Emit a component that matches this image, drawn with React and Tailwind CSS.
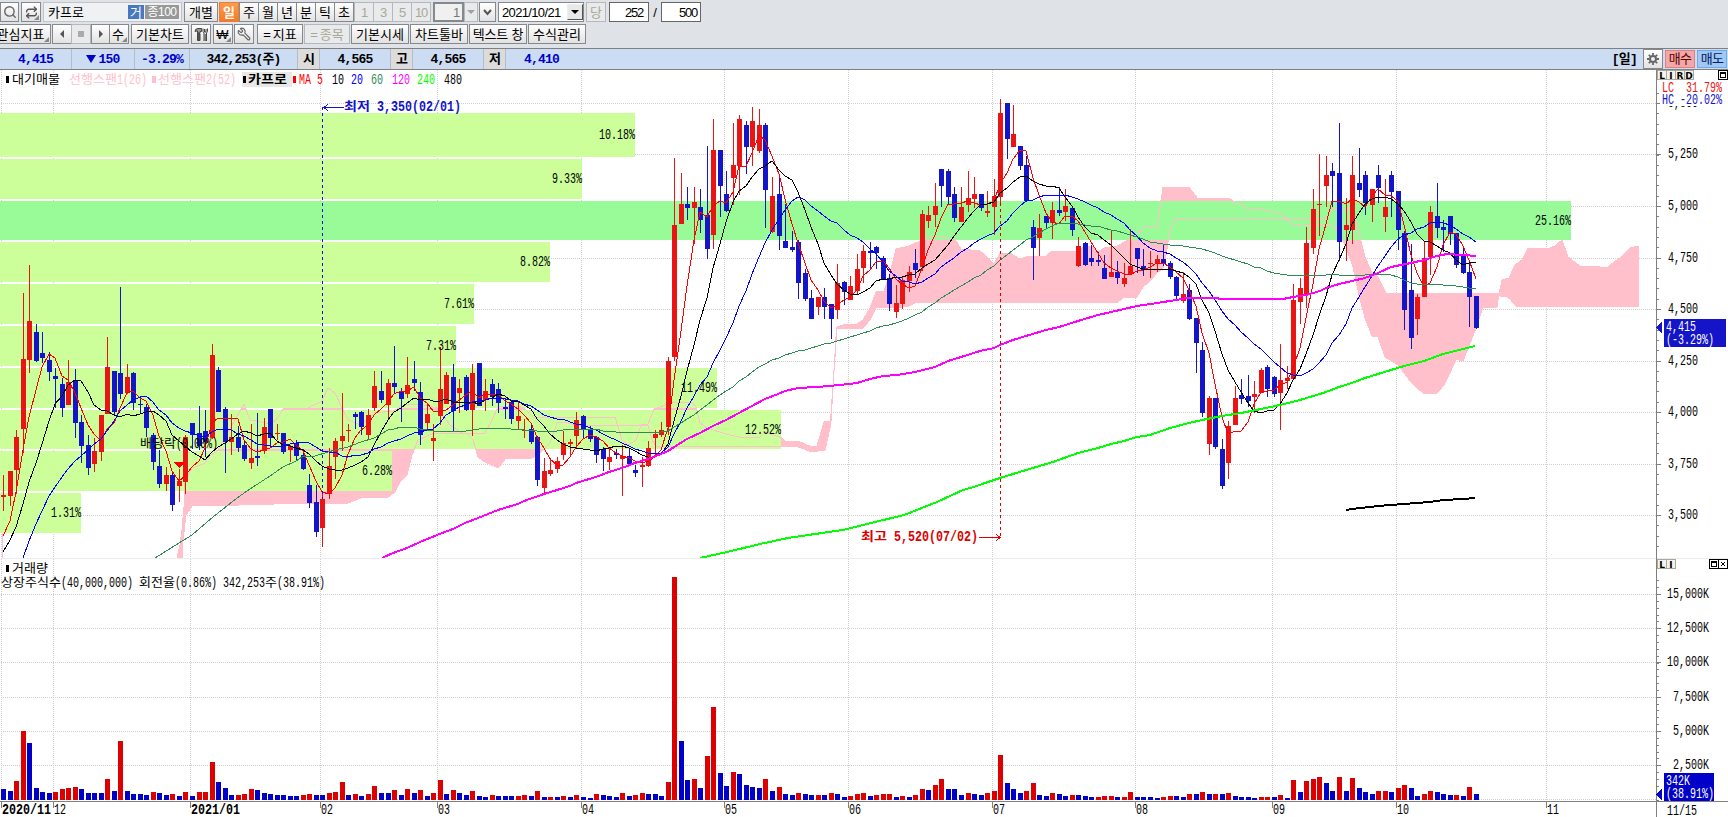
import { Search, Repeat, Wrench } from "lucide-react";

const RED = "#ea1414";
const BLUE = "#1414c8";
const PINK = "#ffc0cb";

// [up, high, bodyTop, bodyBottom, low] as pane y values
const CANDLES = [
  [1,475,495,497,511],[1,471,471,496,506],[1,430,437,470,494],[1,293,359,429,453],[1,265,321,360,373],
  [0,324,332,361,362],[0,332,353,358,363],[0,352,360,372,381],[0,368,376,379,408],[0,378,384,408,417],
  [1,360,382,405,405],[0,369,381,423,438],[0,415,422,446,463],[0,435,445,468,475],[1,438,451,464,472],
  [1,415,415,452,461],[1,337,367,414,414],[0,371,371,412,415],[0,287,373,394,399],[1,364,377,393,394],
  [0,372,373,403,410],[0,396,404,405,413],[0,404,407,428,437],[0,433,435,462,470],[0,450,466,484,488],
  [1,467,475,484,491],[0,473,475,505,511],[1,469,481,486,502],[1,435,437,482,494],[0,423,423,435,449],
  [0,406,433,446,450],[0,410,431,442,457],[1,344,355,438,439],[0,367,370,412,412],[0,407,409,442,473],
  [1,414,437,442,455],[0,426,437,448,452],[0,441,445,459,461],[1,424,458,463,469],[0,413,456,458,466],
  [1,418,427,451,454],[0,409,409,438,448],[1,424,433,434,440],[0,433,433,452,454],[1,445,446,450,462],
  [0,440,443,456,460],[0,449,455,469,470],[0,474,485,503,508],[0,485,502,532,537],[1,494,499,528,547],
  [1,448,466,494,499],[1,438,441,457,479],[1,393,436,441,451],[1,424,430,431,442],[0,412,414,417,429],
  [0,411,412,427,435],[1,409,415,435,439],[1,371,386,408,411],[0,371,391,400,403],[1,379,383,405,419],
  [0,346,383,387,393],[0,388,391,399,422],[1,357,385,394,398],[0,361,379,383,391],[0,382,392,435,445],
  [1,405,414,423,429],[1,424,438,441,461],[1,347,389,416,425],[1,372,375,404,404],[0,364,377,411,431],
  [1,379,388,393,413],[0,375,377,410,411],[1,364,373,410,436],[0,363,363,406,406],[1,379,391,400,411],
  [0,379,384,397,406],[0,383,389,403,413],[0,398,407,409,419],[0,401,402,419,424],[1,402,416,421,429],
  [1,419,430,431,438],[0,424,429,442,444],[0,436,437,480,486],[1,458,471,488,494],[1,458,470,474,476],
  [1,457,461,469,473],[1,431,443,455,460],[1,439,442,444,457],[1,412,420,436,448],[0,415,416,430,438],
  [0,426,429,439,442],[0,436,437,455,463],[0,447,449,459,471],[1,449,457,462,470],[0,449,453,455,459],
  [1,445,456,459,496],[0,449,456,464,466],[0,465,470,473,477],[1,457,465,467,487],[1,441,448,466,467],
  [1,430,434,438,455],[1,422,430,435,437],[1,357,361,427,435],[1,158,225,357,361],[1,173,204,224,224],
  [0,187,204,208,220],[1,187,202,208,244],[0,189,207,220,233],[0,146,215,249,259],[1,119,150,235,249],
  [0,150,150,186,217],[0,171,194,211,212],[1,123,165,178,205],[1,115,119,166,195],[0,121,125,147,174],
  [1,107,121,147,166],[1,109,125,151,153],[0,123,125,190,228],[1,177,196,232,233],[0,174,194,236,250],
  [0,204,241,248,248],[0,231,247,250,252],[0,240,242,283,299],[0,269,273,299,301],[0,290,298,319,319],
  [1,297,297,307,315],[0,288,297,307,319],[0,304,304,319,339],[1,264,283,310,319],[0,281,282,292,305],
  [1,276,286,300,300],[1,254,269,291,295],[1,245,251,268,283],[0,242,251,253,268],[0,246,247,253,269],
  [0,256,258,280,280],[0,274,278,304,311],[1,285,303,312,318],[1,277,280,304,309],[1,266,272,281,292],
  [0,249,263,270,278],[1,210,214,267,271],[1,206,215,221,228],[1,183,206,215,227],[0,169,169,186,207],
  [0,169,171,197,205],[0,187,194,218,222],[1,187,207,222,222],[1,171,198,205,212],[1,177,194,199,208],
  [0,194,194,208,211],[1,191,211,213,217],[1,179,196,207,235],[1,99,113,197,203],[0,103,103,139,159],
  [1,105,134,147,147],[0,146,146,166,170],[0,156,165,201,202],[0,220,227,248,280],[1,214,228,238,256],
  [0,216,216,223,229],[1,202,210,223,239],[0,187,210,213,216],[1,189,206,212,221],[0,208,208,230,236],
  [1,237,246,266,267],[0,242,243,265,266],[0,245,258,262,266],[0,252,260,262,266],[0,255,268,279,279],
  [1,230,272,277,277],[0,261,272,278,284],[1,263,278,284,287],[1,229,266,274,274],[0,248,248,259,273],
  [0,249,266,270,276],[1,251,263,264,278],[1,255,259,264,272],[0,245,259,264,266],[0,261,263,277,279],
  [0,276,277,296,299],[1,272,294,301,303],[0,284,290,319,320],[0,318,318,343,373],[0,342,350,413,417],
  [1,396,398,444,455],[0,398,398,447,449],[0,439,449,486,489],[1,421,426,463,479],[1,386,398,425,425],
  [0,379,395,399,404],[0,375,396,401,407],[1,381,394,397,413],[1,368,370,393,393],[0,365,367,389,397],
  [0,376,377,394,397],[1,344,380,393,430],[1,366,378,381,389],[1,284,300,379,380],[1,278,288,302,324],
  [1,227,243,294,308],[1,189,209,248,254],[1,154,204,205,236],[1,156,175,186,207],[0,163,171,176,207],
  [0,123,173,242,261],[1,198,225,230,261],[1,156,175,230,244],[0,148,183,190,197],[0,171,175,203,215],
  [1,189,189,205,222],[0,165,175,188,203],[1,179,207,217,232],[0,171,175,192,217],[0,191,191,230,250],
  [0,231,233,310,330],[0,244,290,338,349],[1,294,297,319,335],[1,242,258,297,297],[1,206,212,257,275],
  [0,183,216,228,238],[0,220,227,230,252],[0,216,216,234,245],[0,233,233,265,268],[0,247,255,273,274],
  [0,261,272,297,327],[0,296,296,328,329],
];

// bar heights, negative = falling volume
const VOLUMES = [
  -11,-9,19,69,-57,-12,-8,-7,8,11,12,13,-11,-7,-7,-7,21,-9,59,-9,-6,-6,-5,8,-7,-5,6,-4,8,-4,
  8,8,38,-18,-12,-5,5,6,11,-10,-7,-6,-5,-5,-4,-4,5,6,-5,-5,7,8,18,-5,6,-4,6,14,-7,-7,
  10,-5,11,-7,10,-4,7,20,-6,10,-7,-5,9,-4,-3,5,-4,-4,-4,4,5,-4,9,-3,3,-3,4,-3,5,-3,
  -2,6,-5,-4,-3,7,-4,5,7,-6,-6,-4,18,223,-59,-20,21,-12,44,93,-27,-14,28,-26,-15,-13,-12,21,-9,13,
  -6,-5,7,-6,-5,5,-5,7,-6,-3,4,6,7,-4,5,6,6,-3,4,-3,5,11,-10,15,21,-11,-11,-5,7,-6,
  -5,7,9,45,-17,-11,-7,9,17,-5,-4,7,-6,-4,5,-5,-4,-3,3,4,4,-3,3,8,-3,-3,-3,-2,3,4,
  -4,-3,6,-6,8,-6,6,-6,7,-4,-3,-3,-2,3,3,-3,5,-2,20,-8,19,21,23,-17,-9,23,-9,22,-12,-8,
  -6,9,9,-8,12,15,-12,-4,6,9,-8,-6,-5,5,-4,13,-6,
];

const PROFILE = [
  { y: 113, h: 44, w: 635, label: "10.18%" },
  { y: 159, h: 40, w: 582, label: "9.33%" },
  { y: 201, h: 39, w: 1571, label: "25.16%", strong: true },
  { y: 242, h: 40, w: 550, label: "8.82%" },
  { y: 284, h: 40, w: 474, label: "7.61%" },
  { y: 326, h: 40, w: 456, label: "7.31%" },
  { y: 368, h: 40, w: 717, label: "11.49%" },
  { y: 410, h: 39, w: 781, label: "12.52%" },
  { y: 451, h: 40, w: 392, label: "6.28%" },
  { y: 493, h: 40, w: 81, label: "1.31%" },
];

const SPAN_1 =
  "177,558 180,545 182,530 184,507 184,491 185,483 192,468 198,466 205,463 211,455 218,450 231,427 244,404 250,420 257,421 270,424 276,420 283,409 308,408 322,401 328,388 335,393 342,408 348,420 361,425 374,413 393,411 405,405 420,404 437,408 450,425 462,433 485,433 492,420 498,407 517,406 524,408 533,417 615,417 622,440 628,445 636,440 641,425 648,424 654,409 674,402 692,402 696,407 700,423 707,428 726,434 739,437 759,438 765,432 773,435 782,438 785,441 800,442 812,447 817,446 824,422 831,421 836,337 837,327 843,325 857,324 863,320 870,308 876,292 884,291 889,277 896,249 909,246 915,243 935,236 955,239 961,249 980,251 987,257 994,264 1000,253 1010,253 1020,259 1026,257 1046,256 1052,251 1077,251 1085,246 1092,246 1098,252 1104,248 1117,246 1130,239 1137,235 1144,227 1157,227 1163,187 1189,187 1197,198 1225,199 1229,198 1236,204 1241,203 1248,211 1254,208 1262,208 1267,211 1280,213 1293,225 1320,225 1333,226 1339,233 1346,247 1353,267 1359,295 1365,318 1372,336 1378,337 1385,357 1398,365 1411,382 1424,394 1437,393 1444,385 1450,373 1456,359 1463,361 1476,328 1483,307 1497,307 1499,294 1502,280 1509,278 1515,265 1522,260 1528,248 1550,248 1555,246 1562,240 1568,257 1580,266 1593,266 1607,268 1615,261 1620,258 1630,248 1639,246";

const SPAN_2 =
  "182,558 183,540 186,515 192,506 240,505 272,505 275,503 348,503 363,497 388,497 395,492 400,482 407,475 412,455 418,440 427,436 434,433 466,433 473,440 478,457 485,462 498,468 506,458 532,458 541,452 550,443 557,423 563,422 577,425 648,425 652,440 656,446 710,446 781,447 798,447 812,452 825,450 830,428 835,357 837,328 863,328 870,320 876,308 902,307 909,306 917,302 1118,302 1124,297 1137,297 1143,287 1150,281 1157,273 1163,268 1166,255 1170,230 1176,218 1326,218 1333,209 1339,208 1350,208 1354,215 1359,233 1365,257 1372,273 1378,277 1386,293 1498,293 1500,296 1507,297 1510,299 1516,306 1639,306";

const MA_120 =
  "382,558 393,553 407,548 420,542 437,535 453,529 465,523 478,518 498,510 518,504 524,501 544,494 557,490 570,486 576,483 596,477 609,472 622,468 635,463 648,459 661,454 668,451 674,447 687,439 700,433 713,426 726,420 739,413 752,406 765,399 778,394 785,391 798,388 817,387 840,385 857,383 870,379 883,376 897,375 915,372 935,367 948,361 961,357 980,351 994,348 1000,345 1013,340 1026,336 1046,330 1059,327 1078,321 1098,315 1111,312 1137,306 1157,303 1176,300 1187,298 1217,298 1220,299 1283,299 1293,297 1306,295 1320,291 1326,288 1339,284 1365,278 1378,273 1391,267 1411,263 1424,260 1437,256 1447,254 1463,255 1476,256";

const MA_240 =
  "700,558 727,552 760,544 788,538 815,534 843,530 871,523 904,515 937,502 963,490 977,486 985,483 1000,478 1013,474 1033,468 1053,462 1078,453 1098,448 1111,444 1124,441 1137,437 1150,435 1170,428 1189,423 1202,420 1222,416 1241,413 1261,409 1280,405 1300,400 1320,394 1326,392 1339,387 1352,383 1365,378 1378,374 1404,366 1424,361 1443,354 1463,349 1475,346";

const MA_480 = "1346,510 1352,509 1378,506 1404,504 1430,502 1443,500 1463,499 1475,498";

const MA_60_HEAD =
  "155,558 179,543 192,535 213,517 237,498 250,489 270,476 283,467 296,461 302,457 315,456 328,452 335,450 348,447 361,442 374,438 ";

const MONTHS = [
  { x: 1, label: "2020/11", bold: true },
  { x: 53, label: "12" },
  { x: 190, label: "2021/01", bold: true },
  { x: 320, label: "02" },
  { x: 437, label: "03" },
  { x: 581, label: "04" },
  { x: 724, label: "05" },
  { x: 848, label: "06" },
  { x: 992, label: "07" },
  { x: 1135, label: "08" },
  { x: 1272, label: "09" },
  { x: 1396, label: "10" },
  { x: 1546, label: "11" },
];

const PRICES = [
  [103, "5,500"], [154, "5,250"], [206, "5,000"], [258, "4,750"], [309, "4,500"],
  [361, "4,250"], [412, "4,000"], [464, "3,750"], [515, "3,500"],
];

const VOLUME_TICKS = [
  [594, "15,000K"], [628, "12,500K"], [662, "10,000K"], [697, "7,500K"], [731, "5,000K"], [765, "2,500K"],
];

const barX = (i) => 3 + Math.round(i * 6.517);
const closeOf = ([up, , top, bottom]) => (up ? top : bottom);

// moving average points, starting at the first full window
function sma(n) {
  const points = [];
  for (let i = n - 1; i < CANDLES.length; i++) {
    let sum = 0;
    for (let j = i - n + 1; j <= i; j++) sum += closeOf(CANDLES[j]);
    points.push(`${barX(i)},${Math.round(sum / n)}`);
  }
  return points.join(" ");
}

const head = (values, from = 0) => values.map((y, i) => `${barX(i + from)},${y}`).join(" ") + " ";

const MA_5 = head([536, 521, 492, 450]) + sma(5);
const MA_10 = head([552, 540, 527, 504, 482, 463, 444, 421, 404]) + sma(10);
const MA_20 = head([558, 541, 524, 511, 496, 487, 477, 469, 461, 456, 450, 444, 439, 431, 421, 411], 3) + sma(20);
const MA_60 = MA_60_HEAD + sma(60);

const isHangul = (ch) => ch >= "\u3131";

// Fixed-pitch label: latin takes one cell, hangul takes two
function Label({ x, y, children, fill = "#000", bold = false, end = false }) {
  const cell = bold ? 7 : 6;
  const wide = bold ? 13 : 12;
  const runs = children.match(/[\u3131-\uffff]+|[^\u3131-\uffff]+/g) || [];
  const widths = runs.map((r) => r.length * (isHangul(r[0]) ? wide : cell));
  let cursor = end ? x - widths.reduce((a, b) => a + b, 0) : x;
  return (
    <g fill={fill} fontWeight={bold ? 700 : 400}>
      {runs.map((run, i) => {
        const start = cursor;
        cursor += widths[i];
        const hangul = isHangul(run[0]);
        return (
          <text
            key={i}
            x={start}
            y={y}
            textLength={widths[i]}
            lengthAdjust="spacingAndGlyphs"
            fontSize={hangul ? 12.5 : 14.5}
            fontFamily={hangul ? "'Noto Sans CJK KR', sans-serif" : "'Liberation Mono', monospace"}
            style={{ whiteSpace: "pre" }}
          >
            {run}
          </text>
        );
      })}
    </g>
  );
}

function Line({ points, color, width = 1 }) {
  return <polyline points={points} fill="none" stroke={color} strokeWidth={width} />;
}

function GridLines({ rows, top, bottom }) {
  return (
    <g stroke="#cfcfcf" strokeDasharray="1 1">
      {rows.map((y) => <line key={y} x1="1" x2="1656" y1={y + 0.5} y2={y + 0.5} />)}
      {MONTHS.map(({ x }) => <line key={x} x1={x + 0.5} x2={x + 0.5} y1={top} y2={bottom} />)}
    </g>
  );
}

function AxisTicks({ rows, step, from, to }) {
  const minor = [];
  for (let y = rows[0]; y > from; y -= step) minor.push(Math.round(y));
  for (let y = rows[0]; y < to; y += step) minor.push(Math.round(y));
  return (
    <g stroke="#808080">
      {minor.map((y, i) => <line key={i} x1="1657" x2="1659" y1={y + 0.5} y2={y + 0.5} />)}
      {rows.map((y) => <line key={y} x1="1657" x2="1661" y1={y + 0.5} y2={y + 0.5} />)}
    </g>
  );
}

function PaneButtons({ y, letters, close }) {
  const boxX = close ? 1709 : 1718;
  return (
    <g>
      {letters.split("").map((ch, i) => (
        <g key={ch}>
          <rect x={1657.5 + i * 9} y={y + 0.5} width="9" height="9" fill="#f4f3ee" stroke="#aca899" />
          <text x={1662 + i * 9} y={y + 8.5} textAnchor="middle" fontSize="9" fontWeight="900" fontFamily="'DejaVu Sans', sans-serif">{ch}</text>
        </g>
      ))}
      <rect x={boxX + 0.5} y={y + 0.5} width="9" height="9" fill="#fff" stroke="#000" />
      <rect x={boxX + 2} y={y + 2} width="6" height="6" />
      <rect x={boxX + 3} y={y + 4} width="4" height="3" fill="#fff" />
      {close && <rect x="1718.5" y={y + 0.5} width="9" height="9" fill="#fff" stroke="#000" />}
      {close && <path d={`M1721 ${y + 3}l4 4m0 -4l-4 4`} stroke="#000" />}
    </g>
  );
}

function Legend() {
  return (
    <g>
      <rect x="6" y="76" width="3" height="7" />
      <Label x={12} y={84}>대기매물</Label>
      <Label x={69} y={84} fill={PINK}>선행스팬1(26)</Label>
      <rect x="152" y="76" width="4" height="7" fill={PINK} />
      <Label x={158} y={84} fill={PINK}>선행스팬2(52)</Label>
      <rect x="242" y="72" width="50" height="15" fill="#e8e8e8" />
      <rect x="243" y="76" width="3" height="7" />
      <Label x={248} y={84} bold>카프로</Label>
      <rect x="293" y="76" width="3" height="7" fill="#f00" />
      <Label x={299} y={84} fill="#f00">MA</Label>
      <Label x={317} y={84} fill="#f00">5</Label>
      <Label x={332} y={84}>10</Label>
      <Label x={351} y={84} fill="#00f">20</Label>
      <Label x={371} y={84} fill="#2e8b57">60</Label>
      <Label x={392} y={84} fill="#f0f">120</Label>
      <Label x={417} y={84} fill="#0f0">240</Label>
      <Label x={444} y={84}>480</Label>
    </g>
  );
}

function PricePane() {
  return (
    <svg className="block bg-white" width="1728" height="488" viewBox="0 70 1728 488" shapeRendering="crispEdges">
      <GridLines rows={PRICES.map(([y]) => y)} top={70} bottom={557} />
      <polygon points={`${SPAN_1} ${SPAN_2.split(" ").reverse().join(" ")}`} fill={PINK} />
      <rect x="2" y="533" width="1" height="25" fill={PINK} />

      {PROFILE.map(({ y, h, w, strong }) => (
        <rect key={y} x="0" y={y} width={w} height={h} fill={strong ? "#98fb98" : "#ccff99"} />
      ))}
      <Line points={SPAN_1} color={PINK} />
      <Line points={SPAN_2} color={PINK} />

      {CANDLES.map(([up, high, top, bottom, low], i) => (
        <g key={i} fill={up ? RED : BLUE}>
          <rect x={barX(i)} y={high} width="1" height={low - high} />
          <rect x={barX(i) - 2} y={top} width="5" height={Math.max(1, bottom - top)} />
        </g>
      ))}

      <Line points={MA_5} color="#f00" />
      <Line points={MA_10} color="#000" />
      <Line points={MA_20} color="#00f" />
      <Line points={MA_60} color="#2e8b57" />
      <Line points={MA_120} color="#f0f" width={2} />
      <Line points={MA_240} color="#0f0" width={2} />
      <Line points={MA_480} color="#000" width={2} />

      {PROFILE.map(({ y, w, label }) => <Label key={label} x={w} y={y + (y < 120 ? 26 : 24)} end>{label}</Label>)}

      {/* low / high markers */}
      <line x1="322.5" x2="322.5" y1="107" y2="499" stroke={BLUE} strokeDasharray="3 3" />
      <path d="M344 107.5H324M328 104l-4 3.5l4 3.5" fill="none" stroke={BLUE} />
      <Label x={344} y={111} fill={BLUE} bold>최저 3,350(02/01)</Label>
      <line x1="1000.5" x2="1000.5" y1="203" y2="538" stroke="#dc0000" strokeDasharray="3 3" />
      <path d="M979 537.5h21M996 534l4 3.5l-4 3.5" fill="none" stroke="#dc0000" />
      <Label x={861} y={541} fill="#dc0000" bold>최고 5,520(07/02)</Label>

      <Label x={140} y={448}>배당락(0.00%)</Label>
      <path d="M174 462h11l-5.500 6z" fill="#f00" />
      <Legend />

      {/* price axis */}
      <rect x="1656" y="70" width="1" height="488" fill="#808080" />
      <AxisTicks rows={PRICES.map(([y]) => y)} step={10.3} from={92} to={556} />
      {PRICES.map(([y, label]) => <Label key={y} x={1668} y={y + 4}>{label}</Label>)}
      <rect x="1660" y="82" width="68" height="24" fill="#fff" />
      <Label x={1662} y={92} fill={RED}>LC  31.79%</Label>
      <Label x={1662} y={104} fill={BLUE}>HC -20.02%</Label>
      <PaneButtons y={70} letters="LIRD" />
      <path d="M1656 327.500l6-6v12z" fill={BLUE} />
      <rect x="1664" y="319" width="62" height="28" fill={BLUE} />
      <Label x={1666} y={331} fill="#fff">4,415</Label>
      <Label x={1666} y={344} fill="#fff">(-3.29%)</Label>
    </svg>
  );
}

function VolumePane() {
  return (
    <svg className="block bg-white" width="1728" height="259" viewBox="0 558 1728 259" shapeRendering="crispEdges">
      <GridLines rows={[...VOLUME_TICKS.map(([y]) => y), 799]} top={559} bottom={800} />
      <rect x="0" y="558" width="1728" height="1" fill="#ececec" />
      {VOLUMES.map((v, i) => (
        <rect key={i} x={barX(i) - 2} y={800 - Math.abs(v)} width="5" height={Math.abs(v)} fill={v > 0 ? "#dc0000" : "#0000c8"} />
      ))}
      <rect x="6" y="565" width="3" height="7" />
      <Label x={12} y={573}>거래량</Label>
      <Label x={1} y={587}>상장주식수(40,000,000) 회전율(0.86%) 342,253주(38.91%)</Label>

      <rect x="0" y="801" width="1728" height="1" fill="#808080" />
      {MONTHS.map(({ x, label, bold }) => (
        <g key={x}>
          <rect x={x} y="801" width="1" height="7" fill="#808080" />
          <Label x={x + 1} y={814} bold={bold}>{label}</Label>
        </g>
      ))}
      <rect x="1656" y="558" width="1" height="259" fill="#808080" />
      <AxisTicks rows={VOLUME_TICKS.map(([y]) => y)} step={6.85} from={575} to={800} />
      {VOLUME_TICKS.map(([y, label]) => <Label key={y} x={1709} y={y + 4} end>{label}</Label>)}
      <PaneButtons y={559} letters="LI" close />
      <path d="M1656 794.500l6-6v12z" fill="#0000c8" />
      <rect x="1664" y="773" width="50" height="28" fill="#0000c8" />
      <Label x={1666} y={785} fill="#fff">342K</Label>
      <Label x={1666} y={798} fill="#fff">(38.91%)</Label>
      <Label x={1667} y={815}>11/15</Label>
    </svg>
  );
}

function Btn({ className = "", disabled, active, corner, children }) {
  const tone = active
    ? "border-[#e8803a] bg-gradient-to-b from-[#ff9a4a] to-[#f47a20] text-white"
    : disabled
      ? "border-[#b4b8bc] bg-[#e8eaec] text-[#a8a898]"
      : "border-[#85898d] bg-gradient-to-b from-white to-[#e2e2e2] text-black";
  return (
    <div className={`relative flex h-[20px] shrink-0 items-center justify-center overflow-hidden border whitespace-nowrap ${tone} ${className}`}>
      {children}
      {corner && <span className="absolute right-[1px] bottom-[1px] h-0 w-0 border-b-[5px] border-l-[5px] border-b-[#888] border-l-transparent" />}
    </div>
  );
}

function ToolsIcon() {
  return (
    <svg width="15" height="15" viewBox="0 0 15 15" fill="none" stroke="#444">
      <path d="M1 4.500q0-3 3-3h3.500v3h-1.500v1.500h-2.500v-2q-1.500 0-2.500.5z" fill="#999" />
      <path d="M3.500 6.500h2.500v7h-2.500z" fill="#555" />
      <path d="M9 1.500v3l1 1.500v8M13.500 1.500v3l-1 1.500v8M10.500 2v3h1.500v-3M11.200 7v7" />
    </svg>
  );
}

function GearIcon() {
  return (
    <svg width="14" height="14" viewBox="0 0 14 14" fill="none" stroke="#666">
      <circle cx="7" cy="7" r="3" strokeWidth="2" />
      <path d="M7 1v2M7 11v2M1 7h2M11 7h2M2.800 2.800l1.400 1.400M9.800 9.800l1.400 1.400M2.800 11.200l1.400-1.400M9.800 4.200l1.400-1.400" strokeWidth="1.800" />
    </svg>
  );
}

const LATIN = "text-[13px] tracking-[-1.2px]";

function TopToolbar() {
  return (
    <div className="flex h-[20px] items-center">
      <Btn className="w-[19px]"><Search size={14} color="#666" strokeWidth={2.4} /></Btn>
      <Btn className="ml-[2px] w-[20px]" corner><Repeat size={13} color="#555" strokeWidth={2.4} /></Btn>
      <div className="ml-[2px] flex h-[20px] w-[139px] items-center border border-[#c0c4ca] bg-[#f0f1f3] pl-1">
        <span>카프로</span>
        <span className="ml-auto flex h-[14px] w-[16px] items-center justify-center bg-[#4878c0] text-white">거</span>
        <span className="mr-[2px] ml-[1px] flex h-[14px] w-[34px] items-center justify-center bg-[#989898] text-[12px] tracking-[-0.5px] text-white">종100</span>
      </div>
      <Btn className="ml-[2px] w-[34px]">개별</Btn>
      <Btn className="ml-[1px] w-[20px] font-bold" active>일</Btn>
      <Btn className="-mr-px w-[20px]">주</Btn>
      <Btn className="-mr-px w-[20px]">월</Btn>
      <Btn className="-mr-px w-[20px]">년</Btn>
      <Btn className="-mr-px w-[20px]">분</Btn>
      <Btn className="-mr-px w-[20px]">틱</Btn>
      <Btn className="w-[20px]">초</Btn>
      {["1", "3", "5", "10"].map((t) => (
        <Btn key={t} className={`-mr-px w-[20px] ${LATIN}`} disabled>{t}</Btn>
      ))}
      <div className={`ml-[3px] flex h-[20px] w-[31px] items-center justify-end border-2 border-[#85898d] bg-[#f0f0f0] pr-[3px] text-[#777] ${LATIN}`}>1</div>
      <Btn className="w-[14px]" disabled><span className="border-x-[4px] border-t-[4px] border-x-transparent border-t-[#a0a0a0]" /></Btn>
      <Btn className="ml-[1px] w-[17px]">
        <svg width="9" height="7" viewBox="0 0 9 7"><path d="M1 1l3.500 4l3.500-4" fill="none" stroke="#555" strokeWidth="2" /></svg>
      </Btn>
      <div className="ml-[2px] flex h-[20px] w-[86px] items-center justify-between border border-[#85898d] bg-white pl-[3px]">
        <span className="text-[13px] tracking-[-0.65px]">2021/10/21</span>
        <span className="flex h-[16px] w-[16px] items-center justify-center border border-r-[#555] border-b-[#555] border-l-[#eee] border-t-[#eee] bg-[#e8e8e8]">
          <span className="border-x-[4px] border-t-[4px] border-x-transparent border-t-black" />
        </span>
      </div>
      <Btn className="ml-[2px] w-[20px]" disabled>당</Btn>
      <div className={`ml-[3px] flex h-[20px] w-[40px] items-center justify-end border border-[#666] bg-white pr-[5px] ${LATIN}`}>252</div>
      <span className="w-[12px] text-center">/</span>
      <div className={`flex h-[20px] w-[40px] items-center justify-end border border-[#666] bg-white pr-[3px] ${LATIN}`}>500</div>
    </div>
  );
}

function ChartToolbar() {
  return (
    <div className="mt-[2px] flex h-[20px] items-center">
      <Btn className="-ml-[5px] w-[56px] pr-[5px]" corner>관심지표</Btn>
      <Btn className="ml-[1px] w-[20px]"><span className="border-y-[4px] border-r-[4px] border-y-transparent border-r-[#555]" /></Btn>
      <Btn className="-ml-px w-[20px]" disabled><span className="h-[6px] w-[6px] bg-[#aaa]" /></Btn>
      <Btn className="w-[19px]"><span className="border-y-[4px] border-l-[4px] border-y-transparent border-l-[#555]" /></Btn>
      <Btn className="-ml-px w-[20px] pr-[2px]" corner>수</Btn>
      <Btn className="ml-[2px] w-[58px]">기본차트</Btn>
      <Btn className="ml-[2px] w-[20px]"><ToolsIcon /></Btn>
      <Btn className="ml-[2px] w-[20px] pr-[1px]" corner>₩</Btn>
      <Btn className="ml-[1px] w-[20px]"><Wrench size={14} color="#666" className="-scale-x-100" /></Btn>
      <Btn className="ml-[3px] w-[46px] gap-[2px]"><span>=</span>지표</Btn>
      <Btn className="ml-[1px] w-[46px] gap-[2px]" disabled><span>=</span>종목</Btn>
      <Btn className="ml-[1px] w-[58px]">기본시세</Btn>
      <Btn className="ml-[1px] w-[58px]">차트툴바</Btn>
      <Btn className="ml-[1px] w-[58px] tracking-[-0.2px]">텍스트 창</Btn>
      <Btn className="ml-[1px] w-[58px]">수식관리</Btn>
    </div>
  );
}

function QuoteBar() {
  const cell = "flex items-center justify-center border-r border-[#b4bcc8]";
  const tag = "flex w-[22px] items-center justify-center border-r border-[#b4bcc8] bg-[#dcdcdc]";
  return (
    <div className="flex h-[22px] border-y border-[#808080] bg-[#ccdcf2] pr-[1px] font-['Liberation_Mono','Noto_Sans_CJK_KR',monospace] text-[13px] leading-none font-bold tracking-[-0.8px]">
      <div className={`${cell} w-[72px] text-[#0000c8]`}>4,415</div>
      <div className={`${cell} w-[63px] text-[#0000c8]`}>
        <span className="mr-[2px] border-x-[5px] border-t-[8px] border-x-transparent border-t-[#0000c8]" />150
      </div>
      <div className={`${cell} w-[55px] text-[#0000c8]`}>-3.29%</div>
      <div className={`${cell} w-[108px]`}>342,253(주)</div>
      <div className={tag}>시</div>
      <div className={`${cell} w-[71px]`}>4,565</div>
      <div className={tag}>고</div>
      <div className={`${cell} w-[71px]`}>4,565</div>
      <div className={tag}>저</div>
      <div className="flex w-[71px] items-center justify-center text-[#0000c8]">4,410</div>
      <div className="ml-auto flex items-center">
        <span className="mr-[6px]">[일]</span>
        <Btn className="h-[18px] w-[20px]"><GearIcon /></Btn>
        <div className="ml-[2px] flex h-[18px] w-[30px] items-center justify-center border border-[#e08080] bg-[#f0a8a8] font-normal text-[#600000]">매수</div>
        <div className="ml-[2px] flex h-[18px] w-[30px] items-center justify-center border border-[#70a8e8] bg-[#a0c8f4] font-normal text-[#002060]">매도</div>
      </div>
    </div>
  );
}

export default function App() {
  return (
    <div className="h-[817px] w-[1728px] overflow-hidden bg-white text-black">
      <div className="h-[48px] bg-[#dfe3e8] pt-[2px] font-['Liberation_Sans','Noto_Sans_CJK_KR',sans-serif] text-[13px] leading-none">
        <TopToolbar />
        <ChartToolbar />
      </div>
      <QuoteBar />
      <PricePane />
      <VolumePane />
    </div>
  );
}
